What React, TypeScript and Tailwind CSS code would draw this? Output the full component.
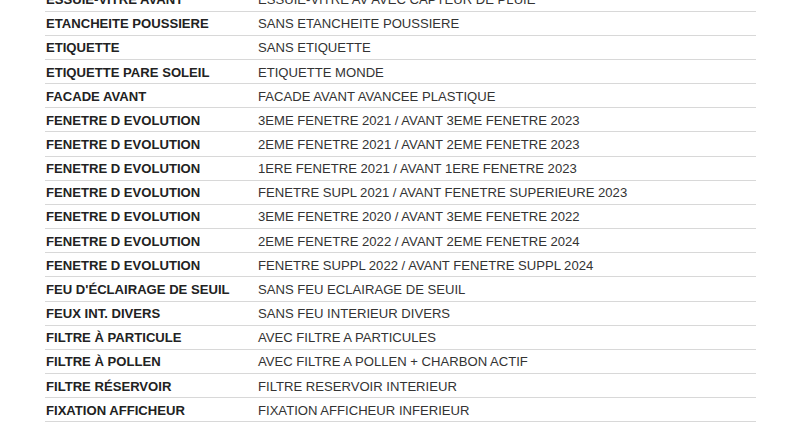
const rows: [string, string][] = [
  ["ESSUIE-VITRE AVANT", "ESSUIE-VITRE AV AVEC CAPTEUR DE PLUIE"],
  ["ETANCHEITE POUSSIERE", "SANS ETANCHEITE POUSSIERE"],
  ["ETIQUETTE", "SANS ETIQUETTE"],
  ["ETIQUETTE PARE SOLEIL", "ETIQUETTE MONDE"],
  ["FACADE AVANT", "FACADE AVANT AVANCEE PLASTIQUE"],
  ["FENETRE D EVOLUTION", "3EME FENETRE 2021 / AVANT 3EME FENETRE 2023"],
  ["FENETRE D EVOLUTION", "2EME FENETRE 2021 / AVANT 2EME FENETRE 2023"],
  ["FENETRE D EVOLUTION", "1ERE FENETRE 2021 / AVANT 1ERE FENETRE 2023"],
  ["FENETRE D EVOLUTION", "FENETRE SUPL 2021 / AVANT FENETRE SUPERIEURE 2023"],
  ["FENETRE D EVOLUTION", "3EME FENETRE 2020 / AVANT 3EME FENETRE 2022"],
  ["FENETRE D EVOLUTION", "2EME FENETRE 2022 / AVANT 2EME FENETRE 2024"],
  ["FENETRE D EVOLUTION", "FENETRE SUPPL 2022 / AVANT FENETRE SUPPL 2024"],
  ["FEU D'ÉCLAIRAGE DE SEUIL", "SANS FEU ECLAIRAGE DE SEUIL"],
  ["FEUX INT. DIVERS", "SANS FEU INTERIEUR DIVERS"],
  ["FILTRE À PARTICULE", "AVEC FILTRE A PARTICULES"],
  ["FILTRE À POLLEN", "AVEC FILTRE A POLLEN + CHARBON ACTIF"],
  ["FILTRE RÉSERVOIR", "FILTRE RESERVOIR INTERIEUR"],
  ["FIXATION AFFICHEUR", "FIXATION AFFICHEUR INFERIEUR"],
];

export default function App() {
  return (
    <div
      className="w-[800px] h-[425px] overflow-hidden bg-white"
      style={{ fontFamily: '"Liberation Sans", Arial, sans-serif' }}
    >
      <div className="-mt-[12.5px] ml-[45px] w-[711px]">
        {rows.map(([label, value], i) => (
          <div
            key={i}
            className="flex h-[24.16px] items-center border-b border-[#d8d8d8] pt-[1px] text-[13.1px] leading-none"
          >
            <div className="w-[213px] pl-[1px] font-bold text-[#222]">{label}</div>
            <div className="text-[#333]">{value}</div>
          </div>
        ))}
      </div>
    </div>
  );
}
